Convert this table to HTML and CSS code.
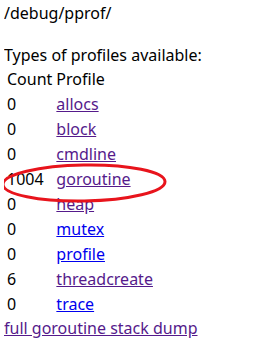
FILE: index.html
```html
<!DOCTYPE html>
<html>
<head>
<meta charset="utf-8">
<title>/debug/pprof/</title>
<link rel="stylesheet" href="styles.css">
</head>
<body>
<div class="page">
/debug/pprof/<br>
<br>
Types of profiles available:
<table class="profiles">
<thead><tr><td>Count</td><td>Profile</td></tr></thead>
<tbody>
<tr><td>0</td><td><a class="seen" href="allocs?debug=1">allocs</a></td></tr>
<tr><td>0</td><td><a class="seen" href="block?debug=1">block</a></td></tr>
<tr><td>0</td><td><a class="seen" href="cmdline?debug=1">cmdline</a></td></tr>
<tr><td>1004</td><td><a class="seen" href="goroutine?debug=1">goroutine</a></td></tr>
<tr><td>0</td><td><a class="seen" href="heap?debug=1">heap</a></td></tr>
<tr><td>0</td><td><a href="mutex?debug=1">mutex</a></td></tr>
<tr><td>0</td><td><a href="profile?debug=1">profile</a></td></tr>
<tr><td>6</td><td><a class="seen" href="threadcreate?debug=1">threadcreate</a></td></tr>
<tr><td>0</td><td><a href="trace?debug=1">trace</a></td></tr>
</tbody>
</table>
<a class="seen" href="goroutine?debug=2">full goroutine stack dump</a>
</div>
<svg class="mark" width="170" height="44" viewBox="0 0 170 44">
  <ellipse cx="83" cy="22" rx="81" ry="18" fill="none" stroke="#e8141c" stroke-width="3" transform="rotate(-1 83 22)"/>
</svg>
</body>
</html>
```
FILE: styles.css
```css
html, body {
  background: #fff;
}
body {
  margin: 3px 4px;
  font-family: "Noto Sans", "Open Sans", sans-serif;
  font-size: 16px;
  line-height: 21px;
  color: #000;
  position: relative;
}
.profiles {
  border-spacing: 2px;
  font-size: 16px;
}
.profiles td {
  padding: 1px;
}
a {
  color: #0000ee;
  text-decoration: underline;
}
a.seen {
  color: #551a8b;
}
.mark {
  position: absolute;
  left: -3px;
  top: 158px;
  pointer-events: none;
}
```
